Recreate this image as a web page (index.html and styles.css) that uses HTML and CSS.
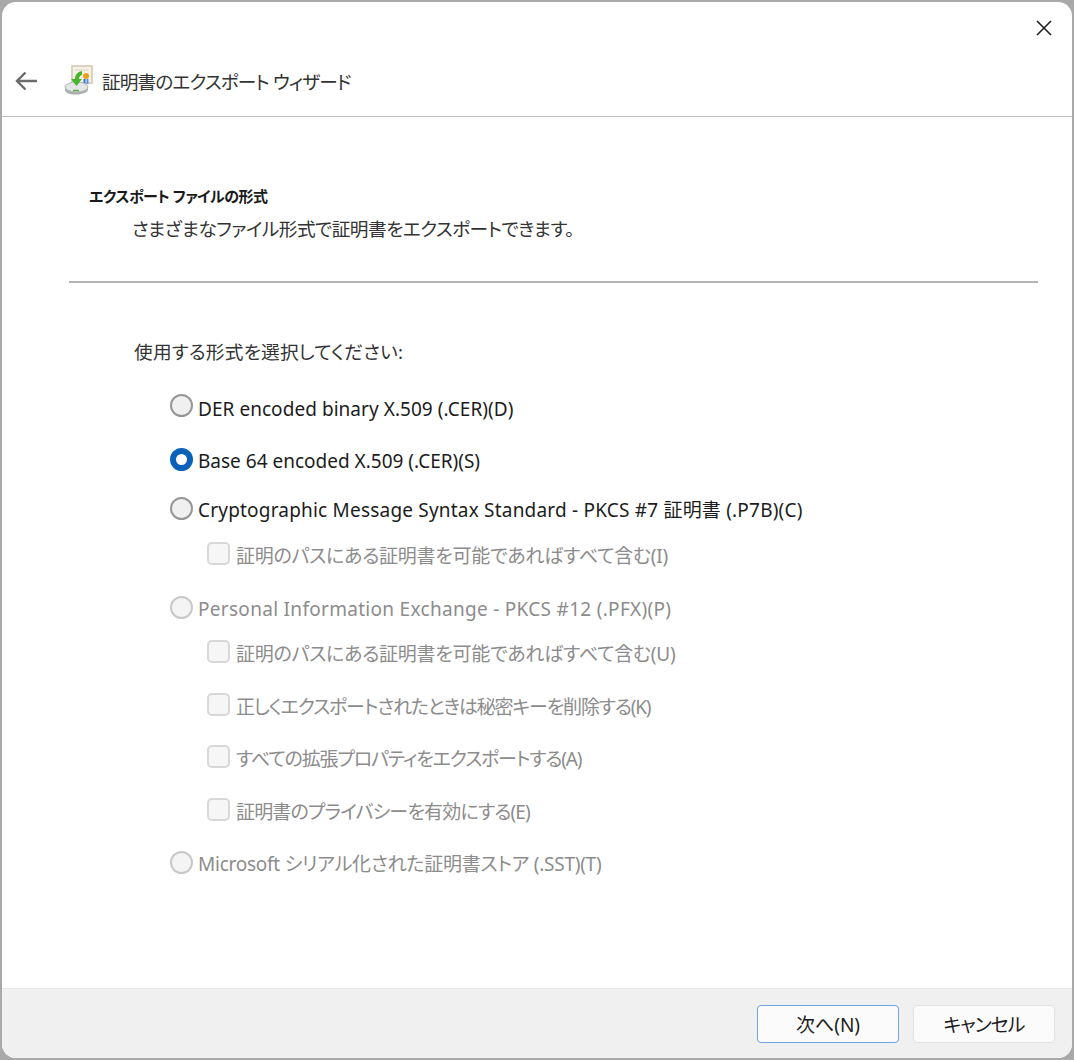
FILE: index.html
```html
<!DOCTYPE html>
<html lang="ja">
<head>
    <meta charset="UTF-8">
    <meta name="viewport" content="width=device-width, initial-scale=1.0">
    <title>証明書のエクスポート ウィザード</title>
    <link rel="stylesheet" href="styles.css">
</head>
<body>
    <div class="window">
        <div class="titlebar">
            <div class="close-row">
                <svg class="close-icon" width="16" height="16" viewBox="0 0 16 16">
                    <path d="M1 1 L15 15 M15 1 L1 15" stroke="#1a1a1a" stroke-width="1.5" fill="none"/>
                </svg>
            </div>
            <div class="title-row">
                <svg class="back-icon" width="24" height="20" viewBox="0 0 24 20">
                    <path d="M2 10 H22 M10.5 1.5 L2 10 L10.5 18.5" stroke="#6b6b6b" stroke-width="2.4" fill="none"/>
                </svg>
                <svg class="wizard-icon" width="30" height="30" viewBox="0 0 30 30">
                    <rect x="8" y="1" width="20" height="17" fill="#f6f2e6" stroke="#cfc6ae" stroke-width="1.5"/>
                    <rect x="11" y="4" width="14" height="2" fill="#e8e2d2"/>
                    <circle cx="22" cy="11" r="3" fill="#e8a020"/>
                    <path d="M19.5 14 h2 v5 h-2z" fill="#3f6fd0"/>
                    <path d="M22.5 14 h2 v5 h-2z" fill="#5b8fe8"/>
                    <path d="M1 22 V25 C1 27.5 5 29.5 12 29.5 C19 29.5 24 27 24 24.5 V22z" fill="#a9adab"/>
                    <ellipse cx="12.5" cy="22" rx="11.5" ry="5" fill="#e3e6e5" stroke="#b4b8b6"/>
                    <path d="M9 25.5 h6" stroke="#5fae4a" stroke-width="1.5"/>
                    <path d="M18 6 C13 7 11 10 11 14 H7 L12.5 21 L18 14 H15 C15 12 16 10.5 18 10z" fill="#46b52e"/>
                </svg>
                <span class="title-text">証明書のエクスポート ウィザード</span>
            </div>
        </div>

        <div class="content">
            <div class="header">
                <h1 class="header-title">エクスポート ファイルの形式</h1>
                <p class="header-sub">さまざまなファイル形式で証明書をエクスポートできます。</p>
            </div>
            <hr class="divider">
            <p class="prompt">使用する形式を選択してください:</p>

            <div class="options">
                <div class="option h54"><span class="radio"></span><span class="label-low">DER encoded binary X.509 (.CER)(D)</span></div>
                <div class="option h49"><span class="radio checked"></span><span>Base 64 encoded X.509 (.CER)(S)</span></div>
                <div class="option h46"><span class="radio"></span><span class="label-wide">Cryptographic Message Syntax Standard - PKCS #7 証明書 (.P7B)(C)</span></div>
                <div class="option sub off h53"><span class="check"></span><span class="tight-1">証明のパスにある証明書を可能であればすべて含む(I)</span></div>
                <div class="option off h45"><span class="radio"></span><span class="label-wider">Personal Information Exchange - PKCS #12 (.PFX)(P)</span></div>
                <div class="option sub off h52"><span class="check"></span><span class="tight-1">証明のパスにある証明書を可能であればすべて含む(U)</span></div>
                <div class="option sub off h52"><span class="check"></span><span class="tight-3">正しくエクスポートされたときは秘密キーを削除する(K)</span></div>
                <div class="option sub off h52"><span class="check"></span><span class="tight-3">すべての拡張プロパティをエクスポートする(A)</span></div>
                <div class="option sub off h52"><span class="check"></span><span class="tight-2">証明書のプライバシーを有効にする(E)</span></div>
                <div class="option off h52"><span class="radio"></span><span class="tight-1">Microsoft シリアル化された証明書ストア (.SST)(T)</span></div>
            </div>
        </div>

        <div class="footer">
            <button class="btn primary">次へ(N)</button>
            <button class="btn kana">キャンセル</button>
        </div>
    </div>
</body>
</html>
```

FILE: styles.css
```css
html, body {
    margin: 0;
    height: 100%;
}
body {
    background: #a9a9a9;
    font-family: "Noto Sans", "Noto Sans CJK JP", sans-serif;
    font-size: 19px;
    font-feature-settings: "palt";
    color: #1c1c1c;
    overflow: hidden;
}
.window {
    box-sizing: border-box;
    width: 1070px;
    height: 1056px;
    margin: 2px 0 0 2px;
    background: #fff;
    border-radius: 14px;
    overflow: hidden;
    display: flex;
    flex-direction: column;
}
.titlebar {
    box-sizing: border-box;
    height: 115px;
    border-bottom: 1px solid #bdbdbd;
    flex-shrink: 0;
}
.close-row {
    display: flex;
    justify-content: flex-end;
    padding: 18px 20px 0 0;
    height: 16px;
}
.title-row {
    display: flex;
    align-items: center;
    margin-top: 26px;
    padding-left: 13px;
    height: 36px;
}
.back-icon {
    margin-top: 2px;
}
.wizard-icon {
    margin-left: 25px;
}
.title-text {
    margin-left: 8px;
    font-size: 18.7px;
    letter-spacing: -0.9px;
    color: #333;
}
.content {
    flex: 1;
}
.header {
    padding: 68px 0 0 87px;
}
.header-title {
    margin: 0;
    font-size: 15px;
    font-weight: 700;
    letter-spacing: -0.5px;
    line-height: 22px;
    color: #1a1a1a;
}
.header-sub {
    margin: 9px 0 0 43px;
    font-size: 18.7px;
    letter-spacing: -0.55px;
    line-height: 26px;
    color: #333;
}
.divider {
    margin: 39px 34px 0 67px;
    border: 0;
    border-top: 2px solid #b4b4b4;
}
.prompt {
    margin: 55px 0 0 132px;
    font-size: 18.7px;
    letter-spacing: 0.2px;
    line-height: 28px;
    color: #333;
}
.options {
    margin: 27px 0 0 168px;
}
.option {
    display: flex;
    align-items: flex-start;
    gap: 5px;
    line-height: 28px;
}
.label-low {
    margin-top: 2px;
    letter-spacing: 0.05px;
}
.label-wide {
    letter-spacing: 0.2px;
}
.label-wider {
    letter-spacing: 0.3px;
}
.tight-1 {
    letter-spacing: -0.25px;
}
.tight-2 {
    letter-spacing: -0.85px;
}
.tight-3 {
    letter-spacing: -1.15px;
}
.h54 { height: 54px; }
.h53 { height: 53px; }
.h52 { height: 52.5px; }
.h49 { height: 49px; }
.h46 { height: 46px; }
.h45 { height: 45px; }
.sub {
    padding-left: 37px;
    gap: 6px;
}
.off {
    color: #8c8c8c;
}
.radio {
    box-sizing: border-box;
    width: 23px;
    height: 23px;
    margin-top: 1px;
    border: 2px solid #969696;
    border-radius: 50%;
    background: #f0f0f0;
    flex-shrink: 0;
}
.radio.checked {
    border: 6.5px solid #0a62b8;
    background: #fff;
}
.off .radio {
    border-color: #c8c8c8;
    background: #f4f4f4;
}
.check {
    box-sizing: border-box;
    width: 23px;
    height: 23px;
    border: 2px solid #d8d8d8;
    border-radius: 5px;
    background: #f6f6f6;
    flex-shrink: 0;
}
.footer {
    box-sizing: border-box;
    height: 70px;
    background: #f0f0f0;
    border-top: 1px solid #e8e8e8;
    display: flex;
    justify-content: flex-end;
    align-items: flex-start;
    gap: 14px;
    padding: 16px 17px 0 0;
    flex-shrink: 0;
}
.btn {
    box-sizing: border-box;
    width: 142px;
    height: 38px;
    background: #fbfbfb;
    border: 1px solid #e2e2e2;
    border-radius: 4px;
    font: inherit;
    font-size: 19px;
    line-height: 1;
    color: #1c1c1c;
    padding: 2px 0 0;
}
.btn.kana {
    letter-spacing: -1px;
}
.btn.primary {
    border: 1.5px solid #6fa5e0;
}
```
